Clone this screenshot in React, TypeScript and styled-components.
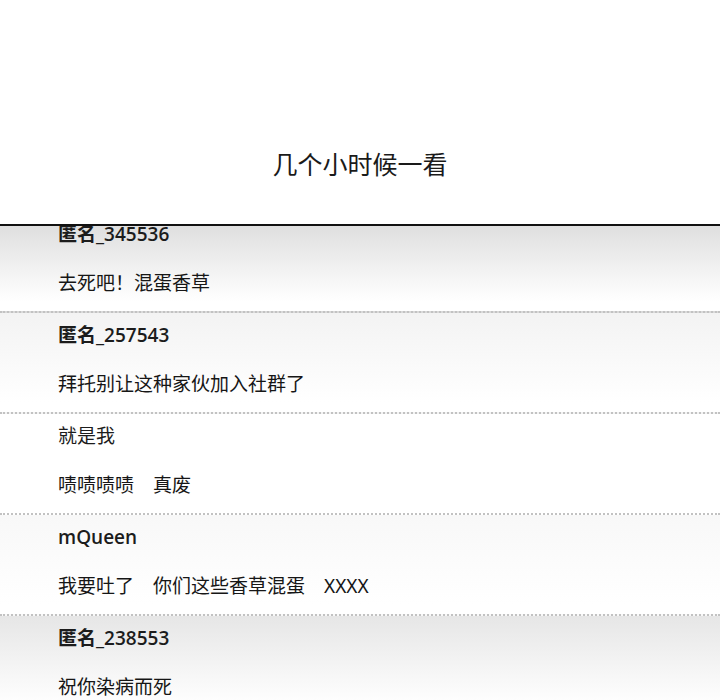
import styled, { createGlobalStyle } from 'styled-components';

const GlobalStyle = createGlobalStyle`
    body {
        margin: 0;
        background: #ffffff;
        font-family: 'Noto Sans', 'Noto Sans CJK SC', sans-serif;
    }
`;

const Page = styled.div`
    width: 720px;
    height: 700px;
    overflow: hidden;
    display: flex;
    flex-direction: column;
`;

const Header = styled.div`
    height: 224px;
    flex-shrink: 0;
    display: flex;
    align-items: flex-end;
    justify-content: center;
    padding-bottom: 43px;
    box-sizing: border-box;
`;

const Title = styled.h1`
    margin: 0;
    font-size: 25px;
    font-weight: 400;
    color: #1a1a1a;
`;

const Board = styled.div`
    border-top: 2px solid #111;
    overflow: hidden;
    display: flex;
    flex-direction: column;
`;

const Row = styled.div<{ $shade: string; $offset?: number }>`
    height: 101px;
    flex-shrink: 0;
    margin-top: ${(p) => p.$offset ?? 0}px;
    padding: 10px 58px 0;
    box-sizing: border-box;
    background: linear-gradient(to bottom, ${(p) => p.$shade} 0%, #ffffff 90%);
    border-bottom: 2px dotted #c2c2c2;
    display: flex;
    flex-direction: column;
    gap: 24px;
`;

const Name = styled.div<{ $plain?: boolean }>`
    font-family: ${(p) =>
        p.$plain ? "'Noto Sans', 'Noto Sans CJK SC', sans-serif" : "'Open Sans', 'Noto Sans CJK SC', sans-serif"};
    font-size: 19px;
    line-height: 24px;
    font-weight: ${(p) => (p.$plain ? 400 : 600)};
    color: #1c1c1c;
`;

const Comment = styled.div`
    font-size: 19px;
    line-height: 26px;
    color: #161616;
    white-space: pre;
`;

const comments = [
    { name: '匿名_345536', text: '去死吧！混蛋香草', shade: '#d9d9d9', offset: -14 },
    { name: '匿名_257543', text: '拜托别让这种家伙加入社群了', shade: '#f3f3f3' },
    { name: '就是我', text: '啧啧啧啧　真废', shade: '#ffffff', plain: true },
    { name: 'mQueen', text: '我要吐了　你们这些香草混蛋　XXXX', shade: '#f8f8f8' },
    { name: '匿名_238553', text: '祝你染病而死', shade: '#e6e6e6' },
];

const App = () => {
    return (
        <Page>
            <GlobalStyle />
            <Header>
                <Title>几个小时候一看</Title>
            </Header>
            <Board>
                {comments.map((c) => (
                    <Row key={c.name} $shade={c.shade} $offset={c.offset}>
                        <Name $plain={c.plain}>{c.name}</Name>
                        <Comment>{c.text}</Comment>
                    </Row>
                ))}
            </Board>
        </Page>
    );
};

export default App;
